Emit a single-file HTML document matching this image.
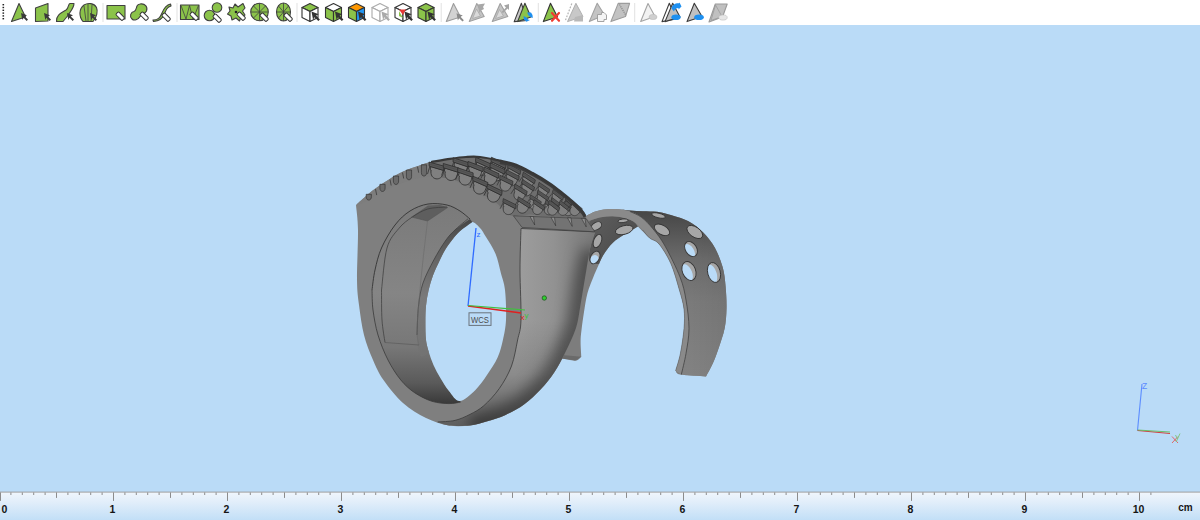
<!DOCTYPE html>
<html><head><meta charset="utf-8"><style>
html,body{margin:0;padding:0;width:1200px;height:520px;overflow:hidden;background:#badbf7;}
svg{display:block;font-family:"Liberation Sans",sans-serif;}
</style></head><body>
<svg width="1200" height="520" viewBox="0 0 1200 520">
<rect x="0" y="0" width="1200" height="520" fill="#badbf7"/>
<rect x="0" y="0" width="1200" height="25" fill="#ffffff"/>
<rect x="2.5" y="4.0" width="1.6" height="1.4" fill="#222"/>
<rect x="2.5" y="6.8" width="1.6" height="1.4" fill="#222"/>
<rect x="2.5" y="9.6" width="1.6" height="1.4" fill="#222"/>
<rect x="2.5" y="12.4" width="1.6" height="1.4" fill="#222"/>
<rect x="2.5" y="15.2" width="1.6" height="1.4" fill="#222"/>
<rect x="2.5" y="18.0" width="1.6" height="1.4" fill="#222"/>
<path d="M19,3.5 L25.5,17 L11.5,21.5Z" fill="#8bc34a" stroke="#404040" stroke-width="1.1" stroke-linejoin="round"/><path d="M21,13 l6.0,2.2 l-2.2,1.2 l3.2,3.2 l-1.3,1.3 l-3.2,-3.2 l-1.2,2.2Z" fill="#3a3a3a"/>
<path d="M35.5,8 L48,3.5 L48,21 L35.5,21.5Z" fill="#8bc34a" stroke="#404040" stroke-width="1.1" stroke-linejoin="round"/><path d="M44,13 l6.0,2.2 l-2.2,1.2 l3.2,3.2 l-1.3,1.3 l-3.2,-3.2 l-1.2,2.2Z" fill="#3a3a3a"/>
<path d="M56.5,21.5 C56,15 61,13 66,10 C69,8 68,4 70,3.5 L74,3.5 C74,8 70,12 67.5,16 L63,21.5Z" fill="#8bc34a" stroke="#404040" stroke-width="1.1" stroke-linejoin="round"/><path d="M67,13 l6.0,2.2 l-2.2,1.2 l3.2,3.2 l-1.3,1.3 l-3.2,-3.2 l-1.2,2.2Z" fill="#3a3a3a"/>
<path d="M83,21.5 C79,17 78.5,9 84,5 C88,2.5 94,3 96.5,7.5 C98,11 97,17 93,21.5Z" fill="#8bc34a" stroke="#404040" stroke-width="1.1" stroke-linejoin="round"/><path d="M84,6 L86,21 M88,4 L88,21 M92,5 L91,21" stroke="#404040" stroke-width="0.8"/><path d="M90,13 l6.0,2.2 l-2.2,1.2 l3.2,3.2 l-1.3,1.3 l-3.2,-3.2 l-1.2,2.2Z" fill="#3a3a3a"/>
<rect x="102.5" y="3" width="1" height="19" fill="#e2e2e2"/>
<rect x="176.5" y="3" width="1" height="19" fill="#e2e2e2"/>
<rect x="296.5" y="3" width="1" height="19" fill="#e2e2e2"/>
<rect x="440.7" y="3" width="1" height="19" fill="#e2e2e2"/>
<rect x="537.8" y="3" width="1" height="19" fill="#e2e2e2"/>
<rect x="634.2" y="3" width="1" height="19" fill="#e2e2e2"/>
<rect x="107" y="5.5" width="18" height="13.5" fill="#8bc34a" stroke="#404040" stroke-width="1.1" stroke-linejoin="round"/><g transform="translate(117,13) rotate(45)"><rect x="0" y="-2" width="9.0" height="4" rx="1.2" fill="#fff" stroke="#333" stroke-width="1"/></g>
<path d="M140,4 C145,3 148,7 146.5,11 C145,14 142,14 140,16.5 C138,20 134,21 132,19 C129,16 131,12 134,11.5 C136,11 136,9 137,6 C137.5,5 138.5,4.2 140,4Z" fill="#8bc34a" stroke="#404040" stroke-width="1.1" stroke-linejoin="round"/><g transform="translate(141,13) rotate(45)"><rect x="0" y="-2" width="9.0" height="4" rx="1.2" fill="#fff" stroke="#333" stroke-width="1"/></g>
<path d="M153,20 C158,20 160,18 162,13 C164,8 166,5 170.5,4 L171,6 C167,7 166,10 164.5,14 C162.5,19 159,21 153.5,21.5Z" fill="#8bc34a" stroke="#404040" stroke-width="1.1" stroke-linejoin="round"/><g transform="translate(163,14) rotate(45)"><rect x="0" y="-2" width="9.0" height="4" rx="1.2" fill="#fff" stroke="#333" stroke-width="1"/></g>
<rect x="180.5" y="5" width="18.5" height="14.5" fill="#8bc34a" stroke="#404040" stroke-width="1.1" stroke-linejoin="round"/><path d="M181,5.5 L186,19 L189.5,5.5 L193,19 L198.5,5.5" stroke="#404040" stroke-width="0.8" fill="none"/><g transform="translate(191,13) rotate(45)"><rect x="0" y="-2" width="9.0" height="4" rx="1.2" fill="#fff" stroke="#333" stroke-width="1"/></g>
<circle cx="217" cy="7.5" r="4.8" fill="#8bc34a" stroke="#404040" stroke-width="1.1" stroke-linejoin="round"/><circle cx="209.5" cy="15.5" r="5.3" fill="#8bc34a" stroke="#404040" stroke-width="1.1" stroke-linejoin="round"/><g transform="translate(214,15) rotate(45)"><rect x="0" y="-2" width="9.0" height="4" rx="1.2" fill="#fff" stroke="#333" stroke-width="1"/></g>
<path d="M229,7 L233,8 L235,4 L238,7 L243,3.5 L245,8 L242.5,11 L245,15 L241,17 L239.5,21 L236,18 L232,20 L231,16 L227.5,14 L230,11Z" fill="#8bc34a" stroke="#404040" stroke-width="1.1" stroke-linejoin="round"/><circle cx="236" cy="12" r="1.3" fill="#222"/><g transform="translate(238,13) rotate(45)"><rect x="0" y="-2" width="9.0" height="4" rx="1.2" fill="#fff" stroke="#333" stroke-width="1"/></g>
<circle cx="259.5" cy="12" r="8.8" fill="#8bc34a" stroke="#404040" stroke-width="1.1" stroke-linejoin="round"/><path d="M259.5,3.5 V20.5 M251,12 H268 M253.5,6 L265.5,18 M265.5,6 L253.5,18" stroke="#404040" stroke-width="0.8"/><g transform="translate(261,14) rotate(45)"><rect x="0" y="-2" width="9.0" height="4" rx="1.2" fill="#fff" stroke="#333" stroke-width="1"/></g>
<ellipse cx="283.5" cy="12" rx="7" ry="9" fill="#8bc34a" stroke="#404040" stroke-width="1.1" stroke-linejoin="round"/><path d="M283.5,3 V21 M276.5,12 H290.5 M278.5,6 L288.5,18 M288.5,6 L278.5,18" stroke="#404040" stroke-width="0.8"/><g transform="translate(285,14) rotate(45)"><rect x="0" y="-2" width="9.0" height="4" rx="1.2" fill="#fff" stroke="#333" stroke-width="1"/></g>
<path d="M302,7.5 L310,3.5 L318,7.5 L310,11.5Z" fill="#8bc34a" stroke="#333" stroke-width="1.1" stroke-linejoin="round"/><path d="M302,7.5 L310,11.5 L310,21.5 L302,17.5Z" fill="#fff" stroke="#333" stroke-width="1.1" stroke-linejoin="round"/><path d="M310,11.5 L318,7.5 L318,17.5 L310,21.5Z" fill="#fff" stroke="#333" stroke-width="1.1" stroke-linejoin="round"/><path d="M311.5,11.5 l7.199999999999999,2.64 l-2.64,1.44 l3.84,3.84 l-1.56,1.56 l-3.84,-3.84 l-1.44,2.64Z" fill="#333"/>
<path d="M325.5,7.5 L333.5,3.5 L341.5,7.5 L333.5,11.5Z" fill="#fff" stroke="#333" stroke-width="1.1" stroke-linejoin="round"/><path d="M325.5,7.5 L333.5,11.5 L333.5,21.5 L325.5,17.5Z" fill="#8bc34a" stroke="#333" stroke-width="1.1" stroke-linejoin="round"/><path d="M333.5,11.5 L341.5,7.5 L341.5,17.5 L333.5,21.5Z" fill="#8bc34a" stroke="#333" stroke-width="1.1" stroke-linejoin="round"/><path d="M335.0,11.5 l7.199999999999999,2.64 l-2.64,1.44 l3.84,3.84 l-1.56,1.56 l-3.84,-3.84 l-1.44,2.64Z" fill="#333"/>
<path d="M348.5,7.5 L356.5,3.5 L364.5,7.5 L356.5,11.5Z" fill="#ff9800" stroke="#333" stroke-width="1.1" stroke-linejoin="round"/><path d="M348.5,7.5 L356.5,11.5 L356.5,21.5 L348.5,17.5Z" fill="#8bc34a" stroke="#333" stroke-width="1.1" stroke-linejoin="round"/><path d="M356.5,11.5 L364.5,7.5 L364.5,17.5 L356.5,21.5Z" fill="#2196f3" stroke="#333" stroke-width="1.1" stroke-linejoin="round"/><path d="M358.0,11.5 l7.199999999999999,2.64 l-2.64,1.44 l3.84,3.84 l-1.56,1.56 l-3.84,-3.84 l-1.44,2.64Z" fill="#333"/>
<path d="M372,7.5 L380,3.5 L388,7.5 L380,11.5Z" fill="#fff" stroke="#aaa" stroke-width="1.1" stroke-linejoin="round"/><path d="M372,7.5 L380,11.5 L380,21.5 L372,17.5Z" fill="#fff" stroke="#aaa" stroke-width="1.1" stroke-linejoin="round"/><path d="M380,11.5 L388,7.5 L388,17.5 L380,21.5Z" fill="#fff" stroke="#aaa" stroke-width="1.1" stroke-linejoin="round"/><path d="M381.5,11.5 l7.199999999999999,2.64 l-2.64,1.44 l3.84,3.84 l-1.56,1.56 l-3.84,-3.84 l-1.44,2.64Z" fill="#aaa"/>
<path d="M395,7.5 L403,3.5 L411,7.5 L403,11.5Z" fill="#fff" stroke="#333" stroke-width="1.1" stroke-linejoin="round"/><path d="M395,7.5 L403,11.5 L403,21.5 L395,17.5Z" fill="#fff" stroke="#333" stroke-width="1.1" stroke-linejoin="round"/><path d="M403,11.5 L411,7.5 L411,17.5 L403,21.5Z" fill="#fff" stroke="#333" stroke-width="1.1" stroke-linejoin="round"/><path d="M399,9.5 L406,9.5 L403,15Z" fill="#e53935"/><path d="M399,11 L399,16 L403,18Z" fill="#8bc34a"/><path d="M404.5,11.5 l7.199999999999999,2.64 l-2.64,1.44 l3.84,3.84 l-1.56,1.56 l-3.84,-3.84 l-1.44,2.64Z" fill="#333"/>
<path d="M418,7.5 L426,3.5 L434,7.5 L426,11.5Z" fill="#8bc34a" stroke="#333" stroke-width="1.1" stroke-linejoin="round"/><path d="M418,7.5 L426,11.5 L426,21.5 L418,17.5Z" fill="#8bc34a" stroke="#333" stroke-width="1.1" stroke-linejoin="round"/><path d="M426,11.5 L434,7.5 L434,17.5 L426,21.5Z" fill="#8bc34a" stroke="#333" stroke-width="1.1" stroke-linejoin="round"/><path d="M427.5,11.5 l7.199999999999999,2.64 l-2.64,1.44 l3.84,3.84 l-1.56,1.56 l-3.84,-3.84 l-1.44,2.64Z" fill="#333"/>
<path d="M453.5,3.5 L460.5,17 L446.3,21.5Z" fill="#d2d2d2" stroke="#9c9c9c" stroke-width="1.1" stroke-linejoin="round"/><path d="M456.5,13.2 l6.300000000000001,2.3100000000000005 l-2.3100000000000005,1.26 l3.3600000000000003,3.3600000000000003 l-1.3650000000000002,1.3650000000000002 l-3.3600000000000003,-3.3600000000000003 l-1.26,2.3100000000000005Z" fill="#8a8a8a"/>
<path d="M476.8,3.5 L484.2,16.5 L469.3,21.5Z" fill="#c4c4c4" stroke="#a0a0a0" stroke-width="1.1" stroke-linejoin="round"/><path d="M476.5,9 L480.5,16 L472.5,18.5Z" fill="#dadada" stroke="#a8a8a8" stroke-width="0.8"/><path d="M477.5,4.5 L485,3.5 L483,7 L484,9 L481,10.5 L479.5,13Z" fill="#a8a8a8"/>
<path d="M500.2,3.5 L507.8,16.5 L492.3,21.5Z" fill="#c4c4c4" stroke="#a0a0a0" stroke-width="1.1" stroke-linejoin="round"/><path d="M499.5,9.5 L503.5,16 L495.5,18.5Z" fill="#dadada" stroke="#a8a8a8" stroke-width="0.8"/><path d="M501.5,12 L506,7.5 L504,5.5 L509,4 L509,10 L507.5,8.5 L503,13Z" fill="#a4a4a4"/>
<path d="M521.4,3.3 L527,20.5 L514.2,21.6Z" fill="#c8c8c8" stroke="#3c3c3c" stroke-width="1.1" stroke-linejoin="round"/><path d="M524.9,3.3 L531,17 L517.6,21.6Z" fill="#8bc34a" stroke="#3c3c3c" stroke-width="1.1" stroke-linejoin="round"/><path d="M527,12.5 L531,12.5 L532.5,15 L532.8,18 L530.5,17 L528.5,15.5Z M523.5,16 L526.5,17.5 L528,19.5 L530,20 L526.5,21.8 L524,19.5Z" fill="#1e90f0"/>
<path d="M550.5,3.3 L557.5,17 L543.3,21.6Z" fill="#8bc34a" stroke="#333" stroke-width="1.1" stroke-linejoin="round"/><path d="M552,13 L559,20.8 M559,13 L552,20.8" stroke="#f03c30" stroke-width="2.2" stroke-linecap="round"/>
<path d="M575.9,3.3 L583,16.5 L567.5,21.6Z" fill="#c8c8c8" stroke="#b0b0b0" stroke-width="1"/><path d="M571.8,3.5 L565,21.5" stroke="#b4b4b4" stroke-width="1.2" stroke-dasharray="1.8,1.4"/><path d="M575,17 L583,15 L583,21.5 L574,21.5Z" fill="#b8b8b8"/>
<path d="M597.2,3.3 L604.5,15 L589.3,21.6Z" fill="#c4c4c4" stroke="#a2a2a2" stroke-width="1.1" stroke-linejoin="round"/><path d="M597.5,14.5 L601.5,14.5 L601.5,12.5 L604,12.5 L606.5,15 L606.5,19.5 L604,19.5 L604,21.5 L597.5,21.5Z" fill="#f4f4f4" stroke="#9a9a9a" stroke-width="0.9"/>
<path d="M618.2,3.4 L629.6,3.4 L625.5,16.5 L610.9,21.6Z" fill="#c2c2c2" stroke="#9c9c9c" stroke-width="1.1" stroke-linejoin="round"/><path d="M619.5,4.5 L626,15.5" stroke="#8a8a8a" stroke-width="1.3" stroke-dasharray="1.2,0.9"/>
<path d="M648,3.5 L655,16.5 L640.7,21.5Z" fill="#f2f2f2" stroke="#a4a4a4" stroke-width="1.1" stroke-linejoin="round"/><ellipse cx="653" cy="17" rx="4" ry="2.6" fill="#cfcfcf" stroke="#bbb" stroke-width="0.6"/>
<path d="M669.3,3.3 L676,19 L662,21.6Z" fill="#fff" stroke="#3c3c3c" stroke-width="1.1" stroke-linejoin="round"/><path d="M672.7,3.3 L680,17 L665,21.6Z" fill="#c0c0c0" stroke="#3c3c3c" stroke-width="1.1" stroke-linejoin="round"/><ellipse cx="676" cy="17.3" rx="4.6" ry="2.8" fill="#1e90f0"/><path d="M671.5,8.5 C672,5 675,3 679,3.2 L679.5,2.5 L681.5,6.5 L678.5,9.5 L678.5,8 C676,8 674.5,9.5 674,11.5Z" fill="#1e90f0"/>
<path d="M694.3,3.3 L702,16.5 L687,21.6Z" fill="#c0c0c0" stroke="#3a3a3a" stroke-width="1.1" stroke-linejoin="round"/><ellipse cx="699" cy="17.2" rx="4.8" ry="2.8" fill="#1e90f0"/>
<path d="M715.3,4 L727.2,4 L722.5,17 L709,22Z" fill="#c0c0c0" stroke="#9a9a9a" stroke-width="1.1" stroke-linejoin="round"/><path d="M715.5,5 L711,20.5 L722,16.5Z" fill="none" stroke="#9a9a9a" stroke-width="0.8"/><ellipse cx="723" cy="17.5" rx="4.2" ry="2.6" fill="#e6e6e6" stroke="#bdbdbd" stroke-width="0.6"/>
<path d="M583.8,217.3 C585.7,216.3 591.4,212.8 595.3,211.5 C599.1,210.2 603.0,209.6 606.9,209.2 C610.8,208.8 614.5,209.0 618.4,209.2 C622.2,209.4 625.9,210.2 630.0,210.5 C634.1,210.8 638.5,211.0 643.0,211.2 C647.5,211.4 652.7,211.2 657.0,211.7 C661.3,212.2 663.6,212.8 668.8,214.4 C674.0,216.0 682.2,217.9 688.0,221.0 C693.8,224.1 699.0,228.2 703.5,232.7 C708.0,237.2 711.8,242.2 715.0,248.0 C718.2,253.8 720.9,260.9 722.7,267.3 C724.5,273.7 725.0,279.6 725.6,286.5 C726.2,293.4 726.7,302.0 726.5,309.0 C726.3,316.0 725.9,322.1 724.6,328.5 C723.3,334.9 720.7,341.9 718.8,347.7 C716.9,353.4 715.1,358.2 713.0,363.0 C710.9,367.8 707.2,374.2 706.0,376.5 C701.7,376.2 685.5,375.6 680.4,374.6 C675.3,373.7 676.4,371.4 675.6,370.8 C676.4,367.9 679.0,360.6 680.4,353.5 C681.8,346.4 683.4,335.9 684.0,328.5 C684.6,321.1 684.8,315.4 684.0,309.0 C683.2,302.6 681.6,297.6 679.4,290.0 C677.2,282.4 674.2,271.2 670.8,263.5 C667.4,255.8 662.5,248.2 659.0,244.0 C655.5,239.8 653.1,240.9 649.6,238.0 C646.1,235.1 639.9,228.5 638.0,226.6 C635.7,227.9 628.4,231.9 624.2,234.6 C620.0,237.3 616.0,239.8 612.6,243.0 C609.2,246.2 606.3,250.5 604.0,254.0 C601.7,257.5 600.8,260.0 599.0,264.0 C597.2,268.0 594.9,273.2 593.0,278.0 C591.1,282.8 589.0,287.3 587.5,293.0 C586.0,298.7 585.0,305.8 584.0,312.0 C583.0,318.2 582.1,325.0 581.5,330.0 C580.9,335.0 580.6,337.6 580.6,342.0 C580.6,346.4 581.2,354.2 581.3,356.7 C580.3,357.4 578.8,360.3 575.6,360.6 C572.4,360.9 564.3,358.9 562.0,358.6 C563.3,348.8 567.0,319.8 570.0,300.0 C573.0,280.2 577.7,253.8 580.0,240.0 C582.3,226.2 583.2,221.1 583.8,217.3Z" fill="#7d7d7d"/>
<path d="M562,355 L581.3,356.7 L575.6,360.6 L562,358.6Z" fill="#6a6a6a"/>
<defs><linearGradient id="bgi" gradientUnits="userSpaceOnUse" x1="590" y1="215" x2="630" y2="250"><stop offset="0" stop-color="#5e5e5e"/><stop offset="0.5" stop-color="#555"/><stop offset="1" stop-color="#4c4c4c"/></linearGradient></defs>
<path d="M589.5,220.8 C591.4,220.2 597.1,218.1 601.0,217.3 C604.9,216.5 608.7,216.1 612.6,216.2 C616.5,216.3 620.7,217.0 624.2,217.9 C627.7,218.8 631.1,220.0 633.4,221.4 C635.7,222.8 637.2,225.7 638.0,226.6 C635.7,227.9 628.4,231.9 624.2,234.6 C620.0,237.3 616.0,239.8 612.6,243.0 C609.2,246.2 606.3,250.5 604.0,254.0 C601.7,257.5 599.8,262.3 599.0,264.0 C597.5,263.7 591.8,265.2 590.0,262.0 C588.2,258.8 588.1,251.9 588.0,245.0 C587.9,238.1 589.2,224.8 589.5,220.8Z" fill="url(#bgi)"/>
<defs><linearGradient id="bgo" gradientUnits="userSpaceOnUse" x1="0" y1="211" x2="0" y2="376"><stop offset="0" stop-color="#464646"/><stop offset="0.12" stop-color="#555"/><stop offset="0.3" stop-color="#6c6c6c"/><stop offset="0.55" stop-color="#7a7a7a"/><stop offset="1" stop-color="#828282"/></linearGradient><linearGradient id="bgo2" gradientUnits="userSpaceOnUse" x1="690" y1="0" x2="727" y2="0"><stop offset="0" stop-color="#000" stop-opacity="0"/><stop offset="1" stop-color="#000" stop-opacity="0.05"/></linearGradient></defs>
<path d="M618.4,209.2 C620.3,209.4 625.9,210.2 630.0,210.5 C634.1,210.8 638.5,211.0 643.0,211.2 C647.5,211.4 652.7,211.2 657.0,211.7 C661.3,212.2 663.6,212.8 668.8,214.4 C674.0,216.0 682.2,217.9 688.0,221.0 C693.8,224.1 699.0,228.2 703.5,232.7 C708.0,237.2 711.8,242.2 715.0,248.0 C718.2,253.8 720.9,260.9 722.7,267.3 C724.5,273.7 725.0,279.6 725.6,286.5 C726.2,293.4 726.7,302.0 726.5,309.0 C726.3,316.0 725.9,322.1 724.6,328.5 C723.3,334.9 720.7,341.9 718.8,347.7 C716.9,353.4 715.1,358.2 713.0,363.0 C710.9,367.8 707.2,374.2 706.0,376.5 L681.3,374.6 C682.1,371.1 684.7,361.2 686.0,353.5 C687.3,345.8 689.0,337.4 689.0,328.5 C689.0,319.6 687.5,308.6 686.0,300.0 C684.5,291.4 683.5,286.0 680.0,277.0 C676.5,268.0 669.5,254.0 665.0,246.0 C660.5,238.0 656.9,233.7 653.0,228.9 C649.1,224.1 645.3,220.2 641.5,217.3 C637.7,214.4 633.9,212.8 630.0,211.5 C626.1,210.2 620.3,209.6 618.4,209.2Z" fill="url(#bgo)"/>
<path d="M618.4,209.2 C620.3,209.4 625.9,210.2 630.0,210.5 C634.1,210.8 638.5,211.0 643.0,211.2 C647.5,211.4 652.7,211.2 657.0,211.7 C661.3,212.2 663.6,212.8 668.8,214.4 C674.0,216.0 682.2,217.9 688.0,221.0 C693.8,224.1 699.0,228.2 703.5,232.7 C708.0,237.2 711.8,242.2 715.0,248.0 C718.2,253.8 720.9,260.9 722.7,267.3 C724.5,273.7 725.0,279.6 725.6,286.5 C726.2,293.4 726.7,302.0 726.5,309.0 C726.3,316.0 725.9,322.1 724.6,328.5 C723.3,334.9 720.7,341.9 718.8,347.7 C716.9,353.4 715.1,358.2 713.0,363.0 C710.9,367.8 707.2,374.2 706.0,376.5 L681.3,374.6 C682.1,371.1 684.7,361.2 686.0,353.5 C687.3,345.8 689.0,337.4 689.0,328.5 C689.0,319.6 687.5,308.6 686.0,300.0 C684.5,291.4 683.5,286.0 680.0,277.0 C676.5,268.0 669.5,254.0 665.0,246.0 C660.5,238.0 656.9,233.7 653.0,228.9 C649.1,224.1 645.3,220.2 641.5,217.3 C637.7,214.4 633.9,212.8 630.0,211.5 C626.1,210.2 620.3,209.6 618.4,209.2Z" fill="url(#bgo2)"/>
<path d="M583.8,217.3 C585.7,216.3 591.4,212.8 595.3,211.5 C599.1,210.2 603.0,209.6 606.9,209.2 C610.8,208.8 614.5,208.8 618.4,209.2 C622.2,209.6 626.1,210.2 630.0,211.5 C633.9,212.8 637.7,214.4 641.5,217.3 C645.3,220.2 649.1,224.1 653.0,228.9 C656.9,233.7 660.5,238.0 665.0,246.0 C669.5,254.0 676.5,268.0 680.0,277.0 C683.5,286.0 684.5,291.4 686.0,300.0 C687.5,308.6 689.0,319.6 689.0,328.5 C689.0,337.4 687.3,345.8 686.0,353.5 C684.7,361.2 682.1,371.1 681.3,374.6 L675.6,370.8 C676.4,367.9 679.0,360.6 680.4,353.5 C681.8,346.4 683.4,335.9 684.0,328.5 C684.6,321.1 684.8,315.4 684.0,309.0 C683.2,302.6 681.6,297.6 679.4,290.0 C677.2,282.4 674.2,271.2 670.8,263.5 C667.4,255.8 662.5,248.2 659.0,244.0 C655.5,239.8 652.3,240.3 649.6,238.0 C646.9,235.7 645.4,232.8 642.7,230.0 C640.0,227.2 636.5,223.4 633.4,221.4 C630.3,219.4 627.7,218.8 624.2,217.9 C620.7,217.0 616.5,216.3 612.6,216.2 C608.7,216.1 604.9,216.5 601.0,217.3 C597.1,218.1 591.4,220.2 589.5,220.8 L583.8,217.3Z" fill="#8a8a8a"/>
<path d="M630.0,211.5 C631.9,212.5 637.7,214.4 641.5,217.3 C645.3,220.2 649.1,224.1 653.0,228.9 C656.9,233.7 660.5,238.0 665.0,246.0 C669.5,254.0 676.5,268.0 680.0,277.0 C683.5,286.0 684.5,291.4 686.0,300.0 C687.5,308.6 689.0,319.6 689.0,328.5 C689.0,337.4 687.3,345.8 686.0,353.5 C684.7,361.2 682.1,371.1 681.3,374.6" stroke="#3a3a3a" stroke-width="0.7" fill="none"/>
<path d="M675.6,370.8 C676.4,367.9 679.0,360.6 680.4,353.5 C681.8,346.4 683.4,335.9 684.0,328.5 C684.6,321.1 684.8,315.4 684.0,309.0 C683.2,302.6 681.6,297.6 679.4,290.0 C677.2,282.4 674.2,271.2 670.8,263.5 C667.4,255.8 662.5,248.2 659.0,244.0 C655.5,239.8 652.3,240.3 649.6,238.0 C646.9,235.7 643.9,231.3 642.7,230.0" stroke="#555" stroke-width="0.5" fill="none"/>
<g transform="rotate(14 658.5 215.5)">
<clipPath id="hc0"><ellipse cx="658.5" cy="215.5" rx="7" ry="2.3"/></clipPath>
<ellipse cx="658.5" cy="215.5" rx="7" ry="2.3" fill="#a6a6a6"/>
<ellipse cx="658.5" cy="215.5" rx="7" ry="2.3" fill="none" stroke="#353535" stroke-width="0.9"/>
</g>
<g transform="rotate(30 662 229.8)">
<clipPath id="hc1"><ellipse cx="662" cy="229.8" rx="8.5" ry="4.6"/></clipPath>
<ellipse cx="662" cy="229.8" rx="8.5" ry="4.6" fill="#a6a6a6"/>
<ellipse cx="662" cy="229.8" rx="8.5" ry="4.6" fill="none" stroke="#353535" stroke-width="0.9"/>
</g>
<g transform="rotate(35 694.8 232)">
<clipPath id="hc2"><ellipse cx="694.8" cy="232" rx="9" ry="5"/></clipPath>
<ellipse cx="694.8" cy="232" rx="9" ry="5" fill="#a6a6a6"/>
<ellipse cx="694.8" cy="232" rx="9" ry="5" fill="none" stroke="#353535" stroke-width="0.9"/>
</g>
<g transform="rotate(58 691 249)">
<clipPath id="hc3"><ellipse cx="691" cy="249" rx="8.2" ry="5.6"/></clipPath>
<ellipse cx="691" cy="249" rx="8.2" ry="5.6" fill="#a6a6a6"/>
<ellipse cx="692.0" cy="251.4" rx="7.8" ry="4.5" fill="#badbf7" clip-path="url(#hc3)"/>
<ellipse cx="691" cy="249" rx="8.2" ry="5.6" fill="none" stroke="#353535" stroke-width="0.9"/>
</g>
<g transform="rotate(68 689 271)">
<clipPath id="hc4"><ellipse cx="689" cy="271" rx="9.8" ry="6.6"/></clipPath>
<ellipse cx="689" cy="271" rx="9.8" ry="6.6" fill="#a6a6a6"/>
<ellipse cx="690.2" cy="273.8" rx="9.3" ry="5.3" fill="#badbf7" clip-path="url(#hc4)"/>
<ellipse cx="689" cy="271" rx="9.8" ry="6.6" fill="none" stroke="#353535" stroke-width="0.9"/>
</g>
<g transform="rotate(75 714 272.5)">
<clipPath id="hc5"><ellipse cx="714" cy="272.5" rx="10.2" ry="6.3"/></clipPath>
<ellipse cx="714" cy="272.5" rx="10.2" ry="6.3" fill="#a6a6a6"/>
<ellipse cx="715.2" cy="275.1" rx="9.7" ry="5.0" fill="#badbf7" clip-path="url(#hc5)"/>
<ellipse cx="714" cy="272.5" rx="10.2" ry="6.3" fill="none" stroke="#353535" stroke-width="0.9"/>
</g>
<g transform="rotate(-5 623 220.8)">
<clipPath id="hc6"><ellipse cx="623" cy="220.8" rx="5" ry="1.8"/></clipPath>
<ellipse cx="623" cy="220.8" rx="5" ry="1.8" fill="#a6a6a6"/>
<ellipse cx="623" cy="220.8" rx="5" ry="1.8" fill="none" stroke="#353535" stroke-width="0.9"/>
</g>
<g transform="rotate(-15 624.2 230)">
<clipPath id="hc7"><ellipse cx="624.2" cy="230" rx="9" ry="4.3"/></clipPath>
<ellipse cx="624.2" cy="230" rx="9" ry="4.3" fill="#a6a6a6"/>
<ellipse cx="624.2" cy="230" rx="9" ry="4.3" fill="none" stroke="#353535" stroke-width="0.9"/>
</g>
<g transform="rotate(-30 596.5 226)">
<clipPath id="hc8"><ellipse cx="596.5" cy="226" rx="5.5" ry="3.6"/></clipPath>
<ellipse cx="596.5" cy="226" rx="5.5" ry="3.6" fill="#a6a6a6"/>
<ellipse cx="596.5" cy="226" rx="5.5" ry="3.6" fill="none" stroke="#353535" stroke-width="0.9"/>
</g>
<g transform="rotate(22 597.5 241)">
<clipPath id="hc9"><ellipse cx="597.5" cy="241" rx="3.8" ry="7"/></clipPath>
<ellipse cx="597.5" cy="241" rx="3.8" ry="7" fill="#a6a6a6"/>
<ellipse cx="597.5" cy="241" rx="3.8" ry="7" fill="none" stroke="#353535" stroke-width="0.9"/>
</g>
<g transform="rotate(28 595 257.5)">
<clipPath id="hc10"><ellipse cx="595" cy="257.5" rx="4.4" ry="6.8"/></clipPath>
<ellipse cx="595" cy="257.5" rx="4.4" ry="6.8" fill="#a6a6a6"/>
<ellipse cx="595.5" cy="260.4" rx="4.2" ry="5.4" fill="#badbf7" clip-path="url(#hc10)"/>
<ellipse cx="595" cy="257.5" rx="4.4" ry="6.8" fill="none" stroke="#353535" stroke-width="0.9"/>
</g>
<path d="M356.0,205.0 C357.5,203.7 362.3,199.3 365.0,197.0 C367.7,194.7 368.7,193.5 372.0,191.0 C375.3,188.5 380.3,185.0 385.0,182.0 C389.7,179.0 395.0,175.5 400.0,173.0 C405.0,170.5 409.8,168.8 415.0,167.0 C420.2,165.2 425.2,163.4 431.0,162.0 C436.8,160.6 444.2,159.6 450.0,158.8 C455.8,158.0 461.0,157.3 466.0,157.0 C471.0,156.7 474.3,156.4 480.0,157.0 C485.7,157.6 493.9,159.4 500.0,160.7 C506.1,162.0 510.8,162.8 516.3,164.8 C521.8,166.9 527.2,170.0 532.7,173.0 C538.2,176.0 544.1,179.5 549.0,182.8 C553.9,186.1 558.2,189.6 562.0,192.6 C565.8,195.6 568.6,197.8 571.9,200.8 C575.2,203.8 579.5,208.2 581.7,210.6 C583.9,213.0 582.8,211.8 585.0,215.5 C587.2,219.2 593.3,229.7 595.0,232.5 C594.2,235.2 591.7,241.4 590.0,249.0 C588.3,256.6 586.6,268.7 585.0,278.0 C583.4,287.3 582.0,296.7 580.5,305.0 C579.0,313.3 578.6,320.0 576.0,328.0 C573.4,336.0 568.6,345.7 565.0,353.0 C561.4,360.3 558.5,366.0 554.5,372.0 C550.5,378.0 546.1,383.6 541.0,389.0 C535.9,394.4 529.9,400.2 524.0,404.5 C518.1,408.8 511.6,412.2 505.5,415.0 C499.4,417.8 493.2,419.5 487.3,421.3 C481.4,423.1 476.4,424.9 470.0,425.6 C463.6,426.3 456.3,426.9 449.0,425.6 C441.7,424.3 433.7,421.8 426.0,418.0 C418.3,414.2 410.1,409.3 403.0,403.0 C395.9,396.7 388.5,387.2 383.5,380.0 C378.5,372.8 376.2,367.5 373.0,360.0 C369.8,352.5 366.3,344.2 364.0,335.0 C361.7,325.8 360.2,314.2 359.0,305.0 C357.8,295.8 357.2,292.5 357.0,280.0 C356.8,267.5 358.2,242.5 358.0,230.0 C357.8,217.5 356.3,209.2 356.0,205.0Z" fill="#7f7f7f"/>
<defs><linearGradient id="og" gradientUnits="userSpaceOnUse" x1="515" y1="0" x2="600" y2="0"><stop offset="0" stop-color="#9e9e9e"/><stop offset="0.45" stop-color="#929292"/><stop offset="1" stop-color="#747474"/></linearGradient><linearGradient id="og2" gradientUnits="userSpaceOnUse" x1="0" y1="320" x2="0" y2="428"><stop offset="0" stop-color="#000" stop-opacity="0"/><stop offset="0.5" stop-color="#000" stop-opacity="0.12"/><stop offset="1" stop-color="#000" stop-opacity="0.42"/></linearGradient></defs>
<path d="M521.0,228.5 L594.8,231.8 C594.0,234.7 591.6,241.3 590.0,249.0 C588.4,256.7 586.6,268.7 585.0,278.0 C583.4,287.3 582.0,296.7 580.5,305.0 C579.0,313.3 578.6,320.0 576.0,328.0 C573.4,336.0 568.6,345.7 565.0,353.0 C561.4,360.3 558.5,366.0 554.5,372.0 C550.5,378.0 546.1,383.6 541.0,389.0 C535.9,394.4 529.9,400.2 524.0,404.5 C518.1,408.8 511.6,412.2 505.5,415.0 C499.4,417.8 493.2,419.5 487.3,421.3 C481.4,423.1 476.4,424.9 470.0,425.6 C463.6,426.3 454.4,426.2 449.0,425.6 C443.6,425.0 439.6,422.6 437.7,422.0 C440.6,421.7 449.6,421.7 455.0,420.4 C460.4,419.1 465.2,416.8 470.0,414.4 C474.8,411.9 478.9,410.0 483.8,405.7 C488.7,401.4 494.8,395.0 499.4,388.4 C504.0,381.8 508.5,374.1 511.5,366.0 C514.5,357.9 516.0,347.7 517.6,340.0 C519.2,332.3 520.6,331.7 521.0,320.0 C521.4,308.3 520.0,285.2 520.0,270.0 C520.0,254.8 520.8,235.4 521.0,228.5Z" fill="url(#og)"/>
<path d="M521.0,228.5 L594.8,231.8 C594.0,234.7 591.6,241.3 590.0,249.0 C588.4,256.7 586.6,268.7 585.0,278.0 C583.4,287.3 582.0,296.7 580.5,305.0 C579.0,313.3 578.6,320.0 576.0,328.0 C573.4,336.0 568.6,345.7 565.0,353.0 C561.4,360.3 558.5,366.0 554.5,372.0 C550.5,378.0 546.1,383.6 541.0,389.0 C535.9,394.4 529.9,400.2 524.0,404.5 C518.1,408.8 511.6,412.2 505.5,415.0 C499.4,417.8 493.2,419.5 487.3,421.3 C481.4,423.1 476.4,424.9 470.0,425.6 C463.6,426.3 454.4,426.2 449.0,425.6 C443.6,425.0 439.6,422.6 437.7,422.0 C440.6,421.7 449.6,421.7 455.0,420.4 C460.4,419.1 465.2,416.8 470.0,414.4 C474.8,411.9 478.9,410.0 483.8,405.7 C488.7,401.4 494.8,395.0 499.4,388.4 C504.0,381.8 508.5,374.1 511.5,366.0 C514.5,357.9 516.0,347.7 517.6,340.0 C519.2,332.3 520.6,331.7 521.0,320.0 C521.4,308.3 520.0,285.2 520.0,270.0 C520.0,254.8 520.8,235.4 521.0,228.5Z" fill="url(#og2)"/>
<defs><clipPath id="ocl"><path d="M521.0,228.5 L594.8,231.8 C594.0,234.7 591.6,241.3 590.0,249.0 C588.4,256.7 586.6,268.7 585.0,278.0 C583.4,287.3 582.0,296.7 580.5,305.0 C579.0,313.3 578.6,320.0 576.0,328.0 C573.4,336.0 568.6,345.7 565.0,353.0 C561.4,360.3 558.5,366.0 554.5,372.0 C550.5,378.0 546.1,383.6 541.0,389.0 C535.9,394.4 529.9,400.2 524.0,404.5 C518.1,408.8 511.6,412.2 505.5,415.0 C499.4,417.8 493.2,419.5 487.3,421.3 C481.4,423.1 476.4,424.9 470.0,425.6 C463.6,426.3 454.4,426.2 449.0,425.6 C443.6,425.0 439.6,422.6 437.7,422.0 C440.6,421.7 449.6,421.7 455.0,420.4 C460.4,419.1 465.2,416.8 470.0,414.4 C474.8,411.9 478.9,410.0 483.8,405.7 C488.7,401.4 494.8,395.0 499.4,388.4 C504.0,381.8 508.5,374.1 511.5,366.0 C514.5,357.9 516.0,347.7 517.6,340.0 C519.2,332.3 520.6,331.7 521.0,320.0 C521.4,308.3 520.0,285.2 520.0,270.0 C520.0,254.8 520.8,235.4 521.0,228.5Z"/></clipPath><filter id="bl8" x="-50%" y="-50%" width="200%" height="200%"><feGaussianBlur stdDeviation="7"/></filter></defs>
<g clip-path="url(#ocl)"><path d="M592.0,250.0 C591.4,252.5 589.7,260.3 588.5,265.0 C587.3,269.7 586.3,271.3 585.0,278.0 C583.7,284.7 582.0,296.7 580.5,305.0 C579.0,313.3 578.6,320.0 576.0,328.0 C573.4,336.0 568.6,345.7 565.0,353.0 C561.4,360.3 558.5,366.0 554.5,372.0 C550.5,378.0 546.1,383.6 541.0,389.0 C535.9,394.4 529.9,400.2 524.0,404.5 C518.1,408.8 511.6,412.2 505.5,415.0 C499.4,417.8 493.2,419.5 487.3,421.3 C481.4,423.1 472.9,424.9 470.0,425.6" stroke="#000" stroke-opacity="0.38" stroke-width="22" fill="none" filter="url(#bl8)"/></g>
<defs><linearGradient id="ig" gradientUnits="userSpaceOnUse" x1="0" y1="204" x2="0" y2="403"><stop offset="0" stop-color="#7a7a7a"/><stop offset="0.45" stop-color="#858585"/><stop offset="0.72" stop-color="#777777"/><stop offset="0.9" stop-color="#5a5a5a"/><stop offset="1" stop-color="#3a3a3a"/></linearGradient></defs>
<path d="M470.0,219.0 C468.3,217.7 463.8,213.3 460.0,211.0 C456.2,208.7 452.3,206.2 447.0,205.0 C441.7,203.8 434.2,203.0 428.0,204.0 C421.8,205.0 415.5,207.5 410.0,211.0 C404.5,214.5 399.8,218.8 395.0,225.0 C390.2,231.2 384.8,240.5 381.5,248.0 C378.2,255.5 376.6,263.0 375.0,270.0 C373.4,277.0 372.3,283.3 372.0,290.0 C371.7,296.7 372.0,302.5 373.0,310.0 C374.0,317.5 375.5,326.7 378.0,335.0 C380.5,343.3 384.2,352.5 388.0,360.0 C391.8,367.5 396.4,374.6 400.8,380.0 C405.2,385.4 409.4,389.1 414.6,392.7 C419.8,396.2 426.3,399.5 432.0,401.3 C437.7,403.1 444.2,403.5 449.0,403.6 C453.8,403.7 458.8,402.3 460.7,402.0 C458.8,400.2 452.4,395.0 449.0,391.0 C445.6,387.0 443.0,382.3 440.4,378.0 C437.8,373.7 435.4,369.3 433.5,365.0 C431.6,360.7 430.1,356.2 428.8,352.0 C427.6,347.8 426.6,345.1 426.0,340.0 C425.4,334.9 425.4,327.2 425.4,321.5 C425.4,315.8 425.5,311.1 426.0,306.0 C426.5,300.9 427.3,295.9 428.5,290.8 C429.7,285.7 431.2,280.2 433.0,275.4 C434.8,270.6 436.9,266.4 439.0,262.0 C441.1,257.6 442.8,253.5 445.8,248.8 C448.9,244.1 453.3,238.8 457.3,233.8 C461.3,228.8 467.9,221.5 470.0,219.0Z" fill="url(#ig)"/>
<path d="M472.3,222.0 C474.8,222.2 477.7,225.5 480.0,228.0 C482.3,230.5 483.4,232.8 486.0,237.0 C488.6,241.2 492.9,247.5 495.4,253.4 C497.9,259.4 499.2,266.6 500.8,272.7 C502.4,278.8 504.1,282.1 505.0,290.0 C505.9,297.9 506.4,311.7 506.0,320.0 C505.6,328.3 504.3,333.8 502.9,340.0 C501.5,346.2 500.3,351.5 497.7,357.3 C495.1,363.1 491.1,369.1 487.3,374.6 C483.6,380.1 479.8,385.8 475.2,390.2 C470.6,394.6 464.0,400.9 459.6,401.0 C455.2,401.1 452.2,394.8 449.0,391.0 C445.8,387.2 443.0,382.3 440.4,378.0 C437.8,373.7 435.4,369.3 433.5,365.0 C431.6,360.7 430.1,356.2 428.8,352.0 C427.6,347.8 426.6,345.1 426.0,340.0 C425.4,334.9 425.4,327.2 425.4,321.5 C425.4,315.8 425.5,311.1 426.0,306.0 C426.5,300.9 427.3,295.9 428.5,290.8 C429.7,285.7 431.2,280.2 433.0,275.4 C434.8,270.6 436.9,266.4 439.0,262.0 C441.1,257.6 442.8,253.5 445.8,248.8 C448.9,244.1 454.1,237.5 457.3,233.8 C460.5,230.1 462.5,228.5 465.0,226.5 C467.5,224.5 469.8,221.8 472.3,222.0Z" fill="#badbf7"/>
<defs><linearGradient id="stg" gradientUnits="userSpaceOnUse" x1="0" y1="219" x2="0" y2="360"><stop offset="0" stop-color="#464646"/><stop offset="0.22" stop-color="#606060"/><stop offset="0.55" stop-color="#7a7a7a"/><stop offset="1" stop-color="#727272"/></linearGradient></defs>
<path d="M470.0,219.0 C467.7,220.7 460.0,225.5 456.0,229.0 C452.0,232.5 449.7,234.8 446.0,240.0 C442.3,245.2 437.6,252.8 433.8,260.0 C430.0,267.2 425.6,275.3 423.0,283.0 C420.4,290.7 419.5,296.5 418.5,306.0 C417.5,315.5 416.6,331.7 417.0,340.0 C417.4,348.3 419.0,354.0 421.0,356.0 C423.0,358.0 427.5,352.7 428.8,352.0 C428.3,350.0 426.6,345.1 426.0,340.0 C425.4,334.9 425.4,327.2 425.4,321.5 C425.4,315.8 425.5,311.1 426.0,306.0 C426.5,300.9 427.3,295.9 428.5,290.8 C429.7,285.7 431.2,280.2 433.0,275.4 C434.8,270.6 436.9,266.4 439.0,262.0 C441.1,257.6 442.8,253.5 445.8,248.8 C448.9,244.1 452.9,238.3 457.3,233.8 C461.7,229.3 469.8,224.0 472.3,222.0Z" fill="url(#stg)"/>
<path d="M411.3,217 L427.5,221 L448,207.3 L440,205 L428,205.5 Z" fill="#5e5e5e"/>
<path d="M381.5,290.0 C382.4,283.0 384.1,258.2 387.0,248.0 C389.9,237.8 394.6,233.7 398.8,228.5 C403.0,223.3 407.5,220.2 412.3,217.0 C417.1,213.8 421.9,210.7 427.7,209.0 C433.5,207.3 443.8,207.3 447.0,207.0" stroke="#3a3a3a" stroke-width="0.7" fill="none"/>
<path d="M411.3,217 L427.5,221 L448,207.3" stroke="#555" stroke-width="0.6" fill="none"/>
<path d="M468.0,218.8 C466.0,220.5 459.7,225.5 456.0,229.0 C452.3,232.5 449.7,234.8 446.0,240.0 C442.3,245.2 437.6,252.8 433.8,260.0 C430.0,267.2 425.6,275.3 423.0,283.0 C420.4,290.7 419.5,297.3 418.5,306.0 C417.5,314.7 417.2,330.2 417.0,335.0" stroke="#3a3a3a" stroke-width="0.7" fill="none"/>
<path d="M427.5,221.0 C426.8,227.5 424.2,248.5 423.0,260.0 C421.8,271.5 421.0,278.3 420.0,290.0 C419.0,301.7 417.2,320.8 417.0,330.0 C416.8,339.2 418.7,342.5 419.0,345.0" stroke="#6a6a6a" stroke-width="0.6" fill="none"/>
<path d="M381.5,290.0 C381.6,295.0 381.4,311.2 382.0,320.0 C382.6,328.8 384.5,338.8 385.0,342.5" stroke="#3a3a3a" stroke-width="0.7" fill="none"/>
<path d="M385,342.5 L419,345" stroke="#555" stroke-width="0.6" fill="none"/>
<path d="M372.0,290.0 C372.2,293.3 372.0,302.5 373.0,310.0 C374.0,317.5 375.5,326.7 378.0,335.0 C380.5,343.3 384.2,352.5 388.0,360.0 C391.8,367.5 396.4,374.6 400.8,380.0 C405.2,385.4 409.4,389.1 414.6,392.7 C419.8,396.2 426.3,399.5 432.0,401.3 C437.7,403.1 444.2,403.5 449.0,403.6 C453.8,403.7 458.8,402.3 460.7,402.0" stroke="#3a3a3a" stroke-width="0.8" fill="none"/>
<path d="M372.0,290.0 C372.5,286.7 373.4,277.0 375.0,270.0 C376.6,263.0 378.2,255.5 381.5,248.0 C384.8,240.5 390.2,231.2 395.0,225.0 C399.8,218.8 404.5,214.5 410.0,211.0 C415.5,207.5 421.8,205.0 428.0,204.0 C434.2,203.0 441.7,203.8 447.0,205.0 C452.3,206.2 456.2,208.7 460.0,211.0 C463.8,213.3 468.3,217.7 470.0,219.0" stroke="#333" stroke-width="0.9" fill="none"/>
<path d="M521.0,228.5 C520.8,235.4 520.0,254.8 520.0,270.0 C520.0,285.2 521.4,308.3 521.0,320.0 C520.6,331.7 519.2,332.3 517.6,340.0 C516.0,347.7 514.5,357.9 511.5,366.0 C508.5,374.1 504.0,381.8 499.4,388.4 C494.8,395.0 488.7,401.4 483.8,405.7 C478.9,410.0 474.8,411.9 470.0,414.4 C465.2,416.8 460.4,419.1 455.0,420.4 C449.6,421.7 440.6,421.7 437.7,422.0" stroke="#383838" stroke-width="0.8" fill="none"/>
<path d="M521,228.5 L594.8,231.8" stroke="#3a3a3a" stroke-width="0.8"/>
<path d="M356.0,205.0 C357.5,203.7 362.3,199.3 365.0,197.0 C367.7,194.7 368.7,193.5 372.0,191.0 C375.3,188.5 380.3,185.0 385.0,182.0 C389.7,179.0 395.0,175.5 400.0,173.0 C405.0,170.5 409.8,168.8 415.0,167.0 C420.2,165.2 425.2,163.4 431.0,162.0 C436.8,160.6 444.2,159.6 450.0,158.8 C455.8,158.0 461.0,157.3 466.0,157.0 C471.0,156.7 474.3,156.4 480.0,157.0 C485.7,157.6 493.9,159.4 500.0,160.7 C506.1,162.0 510.8,162.8 516.3,164.8 C521.8,166.9 527.2,170.0 532.7,173.0 C538.2,176.0 544.1,179.5 549.0,182.8 C553.9,186.1 558.2,189.6 562.0,192.6 C565.8,195.6 568.6,197.8 571.9,200.8 C575.2,203.8 579.5,208.2 581.7,210.6 C583.9,213.0 584.5,214.7 585.0,215.5 C583.3,215.8 579.2,217.1 575.0,217.5 C570.8,217.9 565.0,217.8 560.0,218.0 C555.0,218.2 550.0,218.7 545.0,218.5 C540.0,218.3 535.0,217.5 530.0,217.0 C525.0,216.5 518.9,216.5 514.7,215.5 C510.5,214.5 509.1,213.4 505.0,211.0 C500.9,208.6 494.5,203.8 490.0,201.0 C485.5,198.2 482.2,196.5 478.0,194.0 C473.8,191.5 469.7,188.5 465.0,186.0 C460.3,183.5 454.2,180.7 450.0,179.0 C445.8,177.3 445.0,176.2 440.0,176.0 C435.0,175.8 425.8,177.0 420.0,178.0 C414.2,179.0 410.0,180.3 405.0,182.0 C400.0,183.7 395.0,185.7 390.0,188.0 C385.0,190.3 379.2,193.7 375.0,196.0 C370.8,198.3 368.2,200.5 365.0,202.0 C361.8,203.5 357.5,204.5 356.0,205.0Z" fill="#7d7d7d"/>
<path d="M366.2,194.3 L366.2,196.7 C366.2,201.2 371.4,201.2 371.4,196.7 L371.4,194.3Z" fill="#6a6a6a" stroke="#303030" stroke-width="0.65"/>
<path d="M379.9,184.3 L379.9,188.1 C379.9,192.6 385.1,192.6 385.1,188.1 L385.1,184.3Z" fill="#6a6a6a" stroke="#303030" stroke-width="0.65"/>
<path d="M393.4,176.0 L393.4,181.1 C393.4,185.6 398.6,185.6 398.6,181.1 L398.6,176.0Z" fill="#6a6a6a" stroke="#303030" stroke-width="0.65"/>
<path d="M406.4,170.0 L406.4,176.4 C406.4,180.9 411.6,180.9 411.6,176.4 L411.6,170.0Z" fill="#6a6a6a" stroke="#303030" stroke-width="0.65"/>
<path d="M421.4,164.8 L421.4,172.7 C421.4,177.2 426.6,177.2 426.6,172.7 L426.6,164.8Z" fill="#6a6a6a" stroke="#303030" stroke-width="0.65"/>
<path d="M434.9,161.5 L434.9,170.8 C434.9,175.3 440.1,175.3 440.1,170.8 L440.1,161.5Z" fill="#6a6a6a" stroke="#303030" stroke-width="0.65"/>
<path d="M375.5,189.1 L376.7,195.1" stroke="#383838" stroke-width="0.8"/>
<path d="M390.0,179.5 L391.2,185.5" stroke="#383838" stroke-width="0.8"/>
<path d="M402.5,172.5 L403.7,178.5" stroke="#383838" stroke-width="0.8"/>
<path d="M417.5,166.7 L418.7,172.7" stroke="#383838" stroke-width="0.8"/>
<path d="M431.5,162.4 L432.7,168.4" stroke="#383838" stroke-width="0.8"/>
<path d="M430.0,162.3 L434.0,161.5 L438.0,160.8 L442.0,160.1 L446.0,159.5 L450.0,158.8 L454.0,158.4 L458.0,157.9 L462.0,157.4 L466.0,157.0 L470.0,157.0 L474.0,157.0 L478.0,157.0 L482.0,157.4 L486.0,158.1 L490.0,158.8 L494.0,159.6 L498.0,160.3 L502.0,161.2 L506.0,162.2 L510.0,163.2 L514.0,164.2 L518.0,165.7 L522.0,167.7 L526.0,169.7 L530.0,171.6 L534.0,173.8 L538.0,176.2 L542.0,178.6 L546.0,181.0 L550.0,183.6 L554.0,186.6 L558.0,189.6 L562.0,192.6 L566.0,195.9 L570.0,199.2 L574.0,202.9 L578.0,206.9 L582.0,211.0 L586.0,215.5 L586.0,218.5 L582.0,218.0 L578.0,217.9 L574.0,217.7 L570.0,217.2 L566.0,217.1 L562.0,217.0 L558.0,216.9 L554.0,216.6 L550.0,216.2 L546.0,216.3 L542.0,216.0 L538.0,215.5 L534.0,214.9 L530.0,214.6 L526.0,214.9 L522.0,215.2 L518.0,215.4 L514.0,216.2 L510.0,215.2 L506.0,211.5 L502.0,207.9 L498.0,204.3 L494.0,201.2 L490.0,198.7 L486.0,196.3 L482.0,193.8 L478.0,191.2 L474.0,188.8 L470.0,186.4 L466.0,184.0 L462.0,182.6 L458.0,181.2 L454.0,179.8 L450.0,178.5 L446.0,178.1 L442.0,177.7 L438.0,177.4 L434.0,175.5 L430.0,172.3Z" fill="#6e6e6e"/>
<g transform="translate(499.1,162.8) rotate(21.4) scale(1.08)"><path d="M-6,1.5 L6.5,2.7 L6.5,5 C6.5,14 -5,14 -5,4.8 L-6,4.5Z" fill="#808080" stroke="#2e2e2e" stroke-width="0.7"/><path d="M-7,1.8 L-7.6,9" stroke="#333" stroke-width="0.7"/><path d="M-8.5,-2.2 L6.5,-1.2 L7.5,2.8 L-7.5,1.6Z" fill="#585858" stroke="#2a2a2a" stroke-width="0.65"/><path d="M-7.5,-0.4 L7.5,0.8" stroke="#484848" stroke-width="0.5"/></g>
<g transform="translate(514.7,169.1) rotate(24.2) scale(0.95)"><path d="M-6,1.5 L6.5,2.7 L6.5,5 C6.5,14 -5,14 -5,4.8 L-6,4.5Z" fill="#808080" stroke="#2e2e2e" stroke-width="0.7"/><path d="M-7,1.8 L-7.6,9" stroke="#333" stroke-width="0.7"/><path d="M-8.5,-2.2 L6.5,-1.2 L7.5,2.8 L-7.5,1.6Z" fill="#585858" stroke="#2a2a2a" stroke-width="0.65"/><path d="M-7.5,-0.4 L7.5,0.8" stroke="#484848" stroke-width="0.5"/></g>
<g transform="translate(529.4,177.9) rotate(29.0) scale(0.95)"><path d="M-6,1.5 L6.5,2.7 L6.5,5 C6.5,14 -5,14 -5,4.8 L-6,4.5Z" fill="#808080" stroke="#2e2e2e" stroke-width="0.7"/><path d="M-7,1.8 L-7.6,9" stroke="#333" stroke-width="0.7"/><path d="M-8.5,-2.2 L6.5,-1.2 L7.5,2.8 L-7.5,1.6Z" fill="#585858" stroke="#2a2a2a" stroke-width="0.65"/><path d="M-7.5,-0.4 L7.5,0.8" stroke="#484848" stroke-width="0.5"/></g>
<g transform="translate(544.4,187.6) rotate(30.3) scale(0.85)"><path d="M-6,1.5 L6.5,2.7 L6.5,5 C6.5,14 -5,14 -5,4.8 L-6,4.5Z" fill="#808080" stroke="#2e2e2e" stroke-width="0.7"/><path d="M-7,1.8 L-7.6,9" stroke="#333" stroke-width="0.7"/><path d="M-8.5,-2.2 L6.5,-1.2 L7.5,2.8 L-7.5,1.6Z" fill="#585858" stroke="#2a2a2a" stroke-width="0.65"/><path d="M-7.5,-0.4 L7.5,0.8" stroke="#484848" stroke-width="0.5"/></g>
<g transform="translate(558.4,194.8) rotate(33.2) scale(0.85)"><path d="M-6,1.5 L6.5,2.7 L6.5,5 C6.5,14 -5,14 -5,4.8 L-6,4.5Z" fill="#808080" stroke="#2e2e2e" stroke-width="0.7"/><path d="M-7,1.8 L-7.6,9" stroke="#333" stroke-width="0.7"/><path d="M-8.5,-2.2 L6.5,-1.2 L7.5,2.8 L-7.5,1.6Z" fill="#585858" stroke="#2a2a2a" stroke-width="0.65"/><path d="M-7.5,-0.4 L7.5,0.8" stroke="#484848" stroke-width="0.5"/></g>
<g transform="translate(571.4,202.4) rotate(34.9) scale(0.85)"><path d="M-6,1.5 L6.5,2.7 L6.5,5 C6.5,14 -5,14 -5,4.8 L-6,4.5Z" fill="#808080" stroke="#2e2e2e" stroke-width="0.7"/><path d="M-7,1.8 L-7.6,9" stroke="#333" stroke-width="0.7"/><path d="M-8.5,-2.2 L6.5,-1.2 L7.5,2.8 L-7.5,1.6Z" fill="#585858" stroke="#2a2a2a" stroke-width="0.65"/><path d="M-7.5,-0.4 L7.5,0.8" stroke="#484848" stroke-width="0.5"/></g>
<g transform="translate(483.7,162.7) rotate(19.9) scale(1.08)"><path d="M-6,1.5 L6.5,2.7 L6.5,5 C6.5,14 -5,14 -5,4.8 L-6,4.5Z" fill="#808080" stroke="#2e2e2e" stroke-width="0.7"/><path d="M-7,1.8 L-7.6,9" stroke="#333" stroke-width="0.7"/><path d="M-8.5,-2.2 L6.5,-1.2 L7.5,2.8 L-7.5,1.6Z" fill="#585858" stroke="#2a2a2a" stroke-width="0.65"/><path d="M-7.5,-0.4 L7.5,0.8" stroke="#484848" stroke-width="0.5"/></g>
<g transform="translate(498.1,168.4) rotate(21.4) scale(1.08)"><path d="M-6,1.5 L6.5,2.7 L6.5,5 C6.5,14 -5,14 -5,4.8 L-6,4.5Z" fill="#808080" stroke="#2e2e2e" stroke-width="0.7"/><path d="M-7,1.8 L-7.6,9" stroke="#333" stroke-width="0.7"/><path d="M-8.5,-2.2 L6.5,-1.2 L7.5,2.8 L-7.5,1.6Z" fill="#585858" stroke="#2a2a2a" stroke-width="0.65"/><path d="M-7.5,-0.4 L7.5,0.8" stroke="#484848" stroke-width="0.5"/></g>
<g transform="translate(513.1,174.9) rotate(23.4) scale(0.95)"><path d="M-6,1.5 L6.5,2.7 L6.5,5 C6.5,14 -5,14 -5,4.8 L-6,4.5Z" fill="#808080" stroke="#2e2e2e" stroke-width="0.7"/><path d="M-7,1.8 L-7.6,9" stroke="#333" stroke-width="0.7"/><path d="M-8.5,-2.2 L6.5,-1.2 L7.5,2.8 L-7.5,1.6Z" fill="#585858" stroke="#2a2a2a" stroke-width="0.65"/><path d="M-7.5,-0.4 L7.5,0.8" stroke="#484848" stroke-width="0.5"/></g>
<g transform="translate(528.6,185.2) rotate(28.9) scale(0.95)"><path d="M-6,1.5 L6.5,2.7 L6.5,5 C6.5,14 -5,14 -5,4.8 L-6,4.5Z" fill="#808080" stroke="#2e2e2e" stroke-width="0.7"/><path d="M-7,1.8 L-7.6,9" stroke="#333" stroke-width="0.7"/><path d="M-8.5,-2.2 L6.5,-1.2 L7.5,2.8 L-7.5,1.6Z" fill="#585858" stroke="#2a2a2a" stroke-width="0.65"/><path d="M-7.5,-0.4 L7.5,0.8" stroke="#484848" stroke-width="0.5"/></g>
<g transform="translate(543.5,195.5) rotate(30.2) scale(0.85)"><path d="M-6,1.5 L6.5,2.7 L6.5,5 C6.5,14 -5,14 -5,4.8 L-6,4.5Z" fill="#808080" stroke="#2e2e2e" stroke-width="0.7"/><path d="M-7,1.8 L-7.6,9" stroke="#333" stroke-width="0.7"/><path d="M-8.5,-2.2 L6.5,-1.2 L7.5,2.8 L-7.5,1.6Z" fill="#585858" stroke="#2a2a2a" stroke-width="0.65"/><path d="M-7.5,-0.4 L7.5,0.8" stroke="#484848" stroke-width="0.5"/></g>
<g transform="translate(557.2,203.1) rotate(33.1) scale(0.85)"><path d="M-6,1.5 L6.5,2.7 L6.5,5 C6.5,14 -5,14 -5,4.8 L-6,4.5Z" fill="#808080" stroke="#2e2e2e" stroke-width="0.7"/><path d="M-7,1.8 L-7.6,9" stroke="#333" stroke-width="0.7"/><path d="M-8.5,-2.2 L6.5,-1.2 L7.5,2.8 L-7.5,1.6Z" fill="#585858" stroke="#2a2a2a" stroke-width="0.65"/><path d="M-7.5,-0.4 L7.5,0.8" stroke="#484848" stroke-width="0.5"/></g>
<g transform="translate(570.5,206.3) rotate(34.6) scale(0.85)"><path d="M-6,1.5 L6.5,2.7 L6.5,5 C6.5,14 -5,14 -5,4.8 L-6,4.5Z" fill="#808080" stroke="#2e2e2e" stroke-width="0.7"/><path d="M-7,1.8 L-7.6,9" stroke="#333" stroke-width="0.7"/><path d="M-8.5,-2.2 L6.5,-1.2 L7.5,2.8 L-7.5,1.6Z" fill="#585858" stroke="#2a2a2a" stroke-width="0.65"/><path d="M-7.5,-0.4 L7.5,0.8" stroke="#484848" stroke-width="0.5"/></g>
<g transform="translate(461.4,162.2) rotate(13.4) scale(1.08)"><path d="M-6,1.5 L6.5,2.7 L6.5,5 C6.5,14 -5,14 -5,4.8 L-6,4.5Z" fill="#808080" stroke="#2e2e2e" stroke-width="0.7"/><path d="M-7,1.8 L-7.6,9" stroke="#333" stroke-width="0.7"/><path d="M-8.5,-2.2 L6.5,-1.2 L7.5,2.8 L-7.5,1.6Z" fill="#585858" stroke="#2a2a2a" stroke-width="0.65"/><path d="M-7.5,-0.4 L7.5,0.8" stroke="#484848" stroke-width="0.5"/></g>
<g transform="translate(476.1,166.4) rotate(17.0) scale(1.08)"><path d="M-6,1.5 L6.5,2.7 L6.5,5 C6.5,14 -5,14 -5,4.8 L-6,4.5Z" fill="#808080" stroke="#2e2e2e" stroke-width="0.7"/><path d="M-7,1.8 L-7.6,9" stroke="#333" stroke-width="0.7"/><path d="M-8.5,-2.2 L6.5,-1.2 L7.5,2.8 L-7.5,1.6Z" fill="#585858" stroke="#2a2a2a" stroke-width="0.65"/><path d="M-7.5,-0.4 L7.5,0.8" stroke="#484848" stroke-width="0.5"/></g>
<g transform="translate(492.0,172.5) rotate(21.1) scale(1.08)"><path d="M-6,1.5 L6.5,2.7 L6.5,5 C6.5,14 -5,14 -5,4.8 L-6,4.5Z" fill="#808080" stroke="#2e2e2e" stroke-width="0.7"/><path d="M-7,1.8 L-7.6,9" stroke="#333" stroke-width="0.7"/><path d="M-8.5,-2.2 L6.5,-1.2 L7.5,2.8 L-7.5,1.6Z" fill="#585858" stroke="#2a2a2a" stroke-width="0.65"/><path d="M-7.5,-0.4 L7.5,0.8" stroke="#484848" stroke-width="0.5"/></g>
<g transform="translate(506.8,180.1) rotate(21.4) scale(0.95)"><path d="M-6,1.5 L6.5,2.7 L6.5,5 C6.5,14 -5,14 -5,4.8 L-6,4.5Z" fill="#808080" stroke="#2e2e2e" stroke-width="0.7"/><path d="M-7,1.8 L-7.6,9" stroke="#333" stroke-width="0.7"/><path d="M-8.5,-2.2 L6.5,-1.2 L7.5,2.8 L-7.5,1.6Z" fill="#585858" stroke="#2a2a2a" stroke-width="0.65"/><path d="M-7.5,-0.4 L7.5,0.8" stroke="#484848" stroke-width="0.5"/></g>
<g transform="translate(521.2,189.6) rotate(27.3) scale(0.95)"><path d="M-6,1.5 L6.5,2.7 L6.5,5 C6.5,14 -5,14 -5,4.8 L-6,4.5Z" fill="#808080" stroke="#2e2e2e" stroke-width="0.7"/><path d="M-7,1.8 L-7.6,9" stroke="#333" stroke-width="0.7"/><path d="M-8.5,-2.2 L6.5,-1.2 L7.5,2.8 L-7.5,1.6Z" fill="#585858" stroke="#2a2a2a" stroke-width="0.65"/><path d="M-7.5,-0.4 L7.5,0.8" stroke="#484848" stroke-width="0.5"/></g>
<g transform="translate(536.0,200.0) rotate(29.3) scale(0.85)"><path d="M-6,1.5 L6.5,2.7 L6.5,5 C6.5,14 -5,14 -5,4.8 L-6,4.5Z" fill="#808080" stroke="#2e2e2e" stroke-width="0.7"/><path d="M-7,1.8 L-7.6,9" stroke="#333" stroke-width="0.7"/><path d="M-8.5,-2.2 L6.5,-1.2 L7.5,2.8 L-7.5,1.6Z" fill="#585858" stroke="#2a2a2a" stroke-width="0.65"/><path d="M-7.5,-0.4 L7.5,0.8" stroke="#484848" stroke-width="0.5"/></g>
<g transform="translate(551.2,205.3) rotate(31.8) scale(0.85)"><path d="M-6,1.5 L6.5,2.7 L6.5,5 C6.5,14 -5,14 -5,4.8 L-6,4.5Z" fill="#808080" stroke="#2e2e2e" stroke-width="0.7"/><path d="M-7,1.8 L-7.6,9" stroke="#333" stroke-width="0.7"/><path d="M-8.5,-2.2 L6.5,-1.2 L7.5,2.8 L-7.5,1.6Z" fill="#585858" stroke="#2a2a2a" stroke-width="0.65"/><path d="M-7.5,-0.4 L7.5,0.8" stroke="#484848" stroke-width="0.5"/></g>
<g transform="translate(565.2,205.9) rotate(33.3) scale(0.85)"><path d="M-6,1.5 L6.5,2.7 L6.5,5 C6.5,14 -5,14 -5,4.8 L-6,4.5Z" fill="#808080" stroke="#2e2e2e" stroke-width="0.7"/><path d="M-7,1.8 L-7.6,9" stroke="#333" stroke-width="0.7"/><path d="M-8.5,-2.2 L6.5,-1.2 L7.5,2.8 L-7.5,1.6Z" fill="#585858" stroke="#2a2a2a" stroke-width="0.65"/><path d="M-7.5,-0.4 L7.5,0.8" stroke="#484848" stroke-width="0.5"/></g>
<g transform="translate(577.2,206.3) rotate(36.2) scale(0.85)"><path d="M-6,1.5 L6.5,2.7 L6.5,5 C6.5,14 -5,14 -5,4.8 L-6,4.5Z" fill="#808080" stroke="#2e2e2e" stroke-width="0.7"/><path d="M-7,1.8 L-7.6,9" stroke="#333" stroke-width="0.7"/><path d="M-8.5,-2.2 L6.5,-1.2 L7.5,2.8 L-7.5,1.6Z" fill="#585858" stroke="#2a2a2a" stroke-width="0.65"/><path d="M-7.5,-0.4 L7.5,0.8" stroke="#484848" stroke-width="0.5"/></g>
<g transform="translate(524.5,202.4) rotate(28.2) scale(0.95)"><path d="M-6,1.5 L6.5,2.7 L6.5,5 C6.5,14 -5,14 -5,4.8 L-6,4.5Z" fill="#808080" stroke="#2e2e2e" stroke-width="0.7"/><path d="M-7,1.8 L-7.6,9" stroke="#333" stroke-width="0.7"/><path d="M-8.5,-2.2 L6.5,-1.2 L7.5,2.8 L-7.5,1.6Z" fill="#585858" stroke="#2a2a2a" stroke-width="0.65"/><path d="M-7.5,-0.4 L7.5,0.8" stroke="#484848" stroke-width="0.5"/></g>
<g transform="translate(539.4,204.9) rotate(29.7) scale(0.85)"><path d="M-6,1.5 L6.5,2.7 L6.5,5 C6.5,14 -5,14 -5,4.8 L-6,4.5Z" fill="#808080" stroke="#2e2e2e" stroke-width="0.7"/><path d="M-7,1.8 L-7.6,9" stroke="#333" stroke-width="0.7"/><path d="M-8.5,-2.2 L6.5,-1.2 L7.5,2.8 L-7.5,1.6Z" fill="#585858" stroke="#2a2a2a" stroke-width="0.65"/><path d="M-7.5,-0.4 L7.5,0.8" stroke="#484848" stroke-width="0.5"/></g>
<g transform="translate(554.6,205.7) rotate(32.6) scale(0.85)"><path d="M-6,1.5 L6.5,2.7 L6.5,5 C6.5,14 -5,14 -5,4.8 L-6,4.5Z" fill="#808080" stroke="#2e2e2e" stroke-width="0.7"/><path d="M-7,1.8 L-7.6,9" stroke="#333" stroke-width="0.7"/><path d="M-8.5,-2.2 L6.5,-1.2 L7.5,2.8 L-7.5,1.6Z" fill="#585858" stroke="#2a2a2a" stroke-width="0.65"/><path d="M-7.5,-0.4 L7.5,0.8" stroke="#484848" stroke-width="0.5"/></g>
<g transform="translate(437.5,166.2) rotate(11.5) scale(1.08)"><path d="M-6,1.5 L6.5,2.7 L6.5,5 C6.5,14 -5,14 -5,4.8 L-6,4.5Z" fill="#808080" stroke="#2e2e2e" stroke-width="0.7"/><path d="M-7,1.8 L-7.6,9" stroke="#333" stroke-width="0.7"/><path d="M-8.5,-2.2 L6.5,-1.2 L7.5,2.8 L-7.5,1.6Z" fill="#585858" stroke="#2a2a2a" stroke-width="0.65"/><path d="M-7.5,-0.4 L7.5,0.8" stroke="#484848" stroke-width="0.5"/></g>
<g transform="translate(451.7,167.8) rotate(12.4) scale(1.08)"><path d="M-6,1.5 L6.5,2.7 L6.5,5 C6.5,14 -5,14 -5,4.8 L-6,4.5Z" fill="#808080" stroke="#2e2e2e" stroke-width="0.7"/><path d="M-7,1.8 L-7.6,9" stroke="#333" stroke-width="0.7"/><path d="M-8.5,-2.2 L6.5,-1.2 L7.5,2.8 L-7.5,1.6Z" fill="#585858" stroke="#2a2a2a" stroke-width="0.65"/><path d="M-7.5,-0.4 L7.5,0.8" stroke="#484848" stroke-width="0.5"/></g>
<g transform="translate(466.0,172.4) rotate(14.4) scale(1.08)"><path d="M-6,1.5 L6.5,2.7 L6.5,5 C6.5,14 -5,14 -5,4.8 L-6,4.5Z" fill="#808080" stroke="#2e2e2e" stroke-width="0.7"/><path d="M-7,1.8 L-7.6,9" stroke="#333" stroke-width="0.7"/><path d="M-8.5,-2.2 L6.5,-1.2 L7.5,2.8 L-7.5,1.6Z" fill="#585858" stroke="#2a2a2a" stroke-width="0.65"/><path d="M-7.5,-0.4 L7.5,0.8" stroke="#484848" stroke-width="0.5"/></g>
<g transform="translate(480.9,181.5) rotate(19.0) scale(1.08)"><path d="M-6,1.5 L6.5,2.7 L6.5,5 C6.5,14 -5,14 -5,4.8 L-6,4.5Z" fill="#808080" stroke="#2e2e2e" stroke-width="0.7"/><path d="M-7,1.8 L-7.6,9" stroke="#333" stroke-width="0.7"/><path d="M-8.5,-2.2 L6.5,-1.2 L7.5,2.8 L-7.5,1.6Z" fill="#585858" stroke="#2a2a2a" stroke-width="0.65"/><path d="M-7.5,-0.4 L7.5,0.8" stroke="#484848" stroke-width="0.5"/></g>
<g transform="translate(495.1,189.6) rotate(21.3) scale(1.08)"><path d="M-6,1.5 L6.5,2.7 L6.5,5 C6.5,14 -5,14 -5,4.8 L-6,4.5Z" fill="#808080" stroke="#2e2e2e" stroke-width="0.7"/><path d="M-7,1.8 L-7.6,9" stroke="#333" stroke-width="0.7"/><path d="M-8.5,-2.2 L6.5,-1.2 L7.5,2.8 L-7.5,1.6Z" fill="#585858" stroke="#2a2a2a" stroke-width="0.65"/><path d="M-7.5,-0.4 L7.5,0.8" stroke="#484848" stroke-width="0.5"/></g>
<g transform="translate(510.0,203.6) rotate(22.2) scale(0.95)"><path d="M-6,1.5 L6.5,2.7 L6.5,5 C6.5,14 -5,14 -5,4.8 L-6,4.5Z" fill="#808080" stroke="#2e2e2e" stroke-width="0.7"/><path d="M-7,1.8 L-7.6,9" stroke="#333" stroke-width="0.7"/><path d="M-8.5,-2.2 L6.5,-1.2 L7.5,2.8 L-7.5,1.6Z" fill="#585858" stroke="#2a2a2a" stroke-width="0.65"/><path d="M-7.5,-0.4 L7.5,0.8" stroke="#484848" stroke-width="0.5"/></g>
<path d="M513.4,215.8 L586,218.5 L594.8,231.8 L522,227.4 Z" fill="#737373" stroke="#383838" stroke-width="0.6"/>
<path d="M530.0,216.5 L534.7,225.0 L533.5,216.5Z" fill="#8e8e8e" stroke="#333" stroke-width="0.6"/>
<path d="M551.0,217.3 L555.7,225.8 L554.5,217.3Z" fill="#8e8e8e" stroke="#333" stroke-width="0.6"/>
<path d="M567.5,217.9 L572.2,226.4 L571.0,217.9Z" fill="#8e8e8e" stroke="#333" stroke-width="0.6"/>
<path d="M581.5,218.4 L586.2,226.9 L585.0,218.4Z" fill="#8e8e8e" stroke="#333" stroke-width="0.6"/>
<path d="M500.0,162.5 C502.7,163.1 510.8,164.3 516.3,166.3 C521.8,168.3 527.2,171.5 532.7,174.5 C538.2,177.5 544.1,181.0 549.0,184.3 C553.9,187.6 558.2,191.1 562.0,194.1 C565.8,197.1 568.6,199.3 571.9,202.3 C575.2,205.3 579.5,209.7 581.7,212.1 C583.9,214.5 584.5,216.2 585.0,217.0" stroke="#3c3c3c" stroke-width="3" fill="none"/>
<path d="M431.0,162.0 C434.2,161.5 444.2,159.6 450.0,158.8 C455.8,158.0 461.0,157.3 466.0,157.0 C471.0,156.7 474.3,156.4 480.0,157.0 C485.7,157.6 493.9,159.4 500.0,160.7 C506.1,162.0 510.8,162.8 516.3,164.8 C521.8,166.9 527.2,170.0 532.7,173.0 C538.2,176.0 544.1,179.5 549.0,182.8 C553.9,186.1 558.2,189.6 562.0,192.6 C565.8,195.6 568.6,197.8 571.9,200.8 C575.2,203.8 579.5,208.2 581.7,210.6 C583.9,213.0 584.5,214.7 585.0,215.5" stroke="#383838" stroke-width="2.2" fill="none"/>
<path d="M468,306 L476,228" stroke="#2f6bff" stroke-width="1.3"/>
<text x="476.5" y="236.5" font-size="8" fill="#2f6bff">z</text>
<path d="M468,306 L521,313" stroke="#e02020" stroke-width="1.4"/>
<path d="M468,305.5 L525,310" stroke="#40c040" stroke-width="1.2"/>
<text x="520.5" y="320" font-size="8" fill="#e02020">x</text>
<text x="524.5" y="318" font-size="8" fill="#40c040">y</text>
<rect x="469" y="312.8" width="22" height="12.6" fill="none" stroke="#6a737c" stroke-width="1"/>
<text x="480" y="322.5" text-anchor="middle" font-size="8.3" fill="#4a4a4a" textLength="18" lengthAdjust="spacingAndGlyphs">WCS</text>
<circle cx="544.3" cy="298" r="2.2" fill="#30d030" stroke="#225522" stroke-width="0.8"/>
<path d="M1137.5,430.5 L1142,384" stroke="#5b8cff" stroke-width="1.1"/>
<text x="1142" y="389" font-size="8.5" fill="#5b8cff">Z</text>
<path d="M1137.5,430.5 L1170,433.5" stroke="#d04040" stroke-width="1.1"/>
<path d="M1137.5,430 L1170,432" stroke="#60c060" stroke-width="0.9"/>
<path d="M1172,436.5 L1178,443 M1178,436.5 L1172,443" stroke="#e05a5a" stroke-width="0.9"/>
<path d="M1175.5,435 L1177.5,439 L1180,433.5 M1177.5,439 L1176,442" stroke="#7ac87a" stroke-width="0.9" fill="none"/>
<defs><linearGradient id="rg" x1="0" y1="0" x2="0" y2="1"><stop offset="0" stop-color="#f0f6fc"/><stop offset="0.35" stop-color="#e2eefa"/><stop offset="1" stop-color="#c2dff7"/></linearGradient></defs>
<rect x="0" y="492" width="1200" height="28" fill="url(#rg)"/>
<rect x="0" y="491.6" width="1200" height="1" fill="#a0a0a0"/>
<rect x="0.00" y="492.4" width="1" height="8.5" fill="#8c8c8c"/>
<rect x="10.40" y="492.4" width="1" height="2.6" fill="#8c8c8c"/>
<rect x="21.80" y="492.4" width="1" height="2.6" fill="#8c8c8c"/>
<rect x="33.20" y="492.4" width="1" height="2.6" fill="#8c8c8c"/>
<rect x="44.60" y="492.4" width="1" height="2.6" fill="#8c8c8c"/>
<rect x="56.00" y="492.4" width="1" height="5.5" fill="#8c8c8c"/>
<rect x="67.40" y="492.4" width="1" height="2.6" fill="#8c8c8c"/>
<rect x="78.80" y="492.4" width="1" height="2.6" fill="#8c8c8c"/>
<rect x="90.20" y="492.4" width="1" height="2.6" fill="#8c8c8c"/>
<rect x="101.60" y="492.4" width="1" height="2.6" fill="#8c8c8c"/>
<rect x="113.00" y="492.4" width="1" height="8.5" fill="#8c8c8c"/>
<rect x="124.40" y="492.4" width="1" height="2.6" fill="#8c8c8c"/>
<rect x="135.80" y="492.4" width="1" height="2.6" fill="#8c8c8c"/>
<rect x="147.20" y="492.4" width="1" height="2.6" fill="#8c8c8c"/>
<rect x="158.60" y="492.4" width="1" height="2.6" fill="#8c8c8c"/>
<rect x="170.00" y="492.4" width="1" height="5.5" fill="#8c8c8c"/>
<rect x="181.40" y="492.4" width="1" height="2.6" fill="#8c8c8c"/>
<rect x="192.80" y="492.4" width="1" height="2.6" fill="#8c8c8c"/>
<rect x="204.20" y="492.4" width="1" height="2.6" fill="#8c8c8c"/>
<rect x="215.60" y="492.4" width="1" height="2.6" fill="#8c8c8c"/>
<rect x="227.00" y="492.4" width="1" height="8.5" fill="#8c8c8c"/>
<rect x="238.40" y="492.4" width="1" height="2.6" fill="#8c8c8c"/>
<rect x="249.80" y="492.4" width="1" height="2.6" fill="#8c8c8c"/>
<rect x="261.20" y="492.4" width="1" height="2.6" fill="#8c8c8c"/>
<rect x="272.60" y="492.4" width="1" height="2.6" fill="#8c8c8c"/>
<rect x="284.00" y="492.4" width="1" height="5.5" fill="#8c8c8c"/>
<rect x="295.40" y="492.4" width="1" height="2.6" fill="#8c8c8c"/>
<rect x="306.80" y="492.4" width="1" height="2.6" fill="#8c8c8c"/>
<rect x="318.20" y="492.4" width="1" height="2.6" fill="#8c8c8c"/>
<rect x="329.60" y="492.4" width="1" height="2.6" fill="#8c8c8c"/>
<rect x="341.00" y="492.4" width="1" height="8.5" fill="#8c8c8c"/>
<rect x="352.40" y="492.4" width="1" height="2.6" fill="#8c8c8c"/>
<rect x="363.80" y="492.4" width="1" height="2.6" fill="#8c8c8c"/>
<rect x="375.20" y="492.4" width="1" height="2.6" fill="#8c8c8c"/>
<rect x="386.60" y="492.4" width="1" height="2.6" fill="#8c8c8c"/>
<rect x="398.00" y="492.4" width="1" height="5.5" fill="#8c8c8c"/>
<rect x="409.40" y="492.4" width="1" height="2.6" fill="#8c8c8c"/>
<rect x="420.80" y="492.4" width="1" height="2.6" fill="#8c8c8c"/>
<rect x="432.20" y="492.4" width="1" height="2.6" fill="#8c8c8c"/>
<rect x="443.60" y="492.4" width="1" height="2.6" fill="#8c8c8c"/>
<rect x="455.00" y="492.4" width="1" height="8.5" fill="#8c8c8c"/>
<rect x="466.40" y="492.4" width="1" height="2.6" fill="#8c8c8c"/>
<rect x="477.80" y="492.4" width="1" height="2.6" fill="#8c8c8c"/>
<rect x="489.20" y="492.4" width="1" height="2.6" fill="#8c8c8c"/>
<rect x="500.60" y="492.4" width="1" height="2.6" fill="#8c8c8c"/>
<rect x="512.00" y="492.4" width="1" height="5.5" fill="#8c8c8c"/>
<rect x="523.40" y="492.4" width="1" height="2.6" fill="#8c8c8c"/>
<rect x="534.80" y="492.4" width="1" height="2.6" fill="#8c8c8c"/>
<rect x="546.20" y="492.4" width="1" height="2.6" fill="#8c8c8c"/>
<rect x="557.60" y="492.4" width="1" height="2.6" fill="#8c8c8c"/>
<rect x="569.00" y="492.4" width="1" height="8.5" fill="#8c8c8c"/>
<rect x="580.40" y="492.4" width="1" height="2.6" fill="#8c8c8c"/>
<rect x="591.80" y="492.4" width="1" height="2.6" fill="#8c8c8c"/>
<rect x="603.20" y="492.4" width="1" height="2.6" fill="#8c8c8c"/>
<rect x="614.60" y="492.4" width="1" height="2.6" fill="#8c8c8c"/>
<rect x="626.00" y="492.4" width="1" height="5.5" fill="#8c8c8c"/>
<rect x="637.40" y="492.4" width="1" height="2.6" fill="#8c8c8c"/>
<rect x="648.80" y="492.4" width="1" height="2.6" fill="#8c8c8c"/>
<rect x="660.20" y="492.4" width="1" height="2.6" fill="#8c8c8c"/>
<rect x="671.60" y="492.4" width="1" height="2.6" fill="#8c8c8c"/>
<rect x="683.00" y="492.4" width="1" height="8.5" fill="#8c8c8c"/>
<rect x="694.40" y="492.4" width="1" height="2.6" fill="#8c8c8c"/>
<rect x="705.80" y="492.4" width="1" height="2.6" fill="#8c8c8c"/>
<rect x="717.20" y="492.4" width="1" height="2.6" fill="#8c8c8c"/>
<rect x="728.60" y="492.4" width="1" height="2.6" fill="#8c8c8c"/>
<rect x="740.00" y="492.4" width="1" height="5.5" fill="#8c8c8c"/>
<rect x="751.40" y="492.4" width="1" height="2.6" fill="#8c8c8c"/>
<rect x="762.80" y="492.4" width="1" height="2.6" fill="#8c8c8c"/>
<rect x="774.20" y="492.4" width="1" height="2.6" fill="#8c8c8c"/>
<rect x="785.60" y="492.4" width="1" height="2.6" fill="#8c8c8c"/>
<rect x="797.00" y="492.4" width="1" height="8.5" fill="#8c8c8c"/>
<rect x="808.40" y="492.4" width="1" height="2.6" fill="#8c8c8c"/>
<rect x="819.80" y="492.4" width="1" height="2.6" fill="#8c8c8c"/>
<rect x="831.20" y="492.4" width="1" height="2.6" fill="#8c8c8c"/>
<rect x="842.60" y="492.4" width="1" height="2.6" fill="#8c8c8c"/>
<rect x="854.00" y="492.4" width="1" height="5.5" fill="#8c8c8c"/>
<rect x="865.40" y="492.4" width="1" height="2.6" fill="#8c8c8c"/>
<rect x="876.80" y="492.4" width="1" height="2.6" fill="#8c8c8c"/>
<rect x="888.20" y="492.4" width="1" height="2.6" fill="#8c8c8c"/>
<rect x="899.60" y="492.4" width="1" height="2.6" fill="#8c8c8c"/>
<rect x="911.00" y="492.4" width="1" height="8.5" fill="#8c8c8c"/>
<rect x="922.40" y="492.4" width="1" height="2.6" fill="#8c8c8c"/>
<rect x="933.80" y="492.4" width="1" height="2.6" fill="#8c8c8c"/>
<rect x="945.20" y="492.4" width="1" height="2.6" fill="#8c8c8c"/>
<rect x="956.60" y="492.4" width="1" height="2.6" fill="#8c8c8c"/>
<rect x="968.00" y="492.4" width="1" height="5.5" fill="#8c8c8c"/>
<rect x="979.40" y="492.4" width="1" height="2.6" fill="#8c8c8c"/>
<rect x="990.80" y="492.4" width="1" height="2.6" fill="#8c8c8c"/>
<rect x="1002.20" y="492.4" width="1" height="2.6" fill="#8c8c8c"/>
<rect x="1013.60" y="492.4" width="1" height="2.6" fill="#8c8c8c"/>
<rect x="1025.00" y="492.4" width="1" height="8.5" fill="#8c8c8c"/>
<rect x="1036.40" y="492.4" width="1" height="2.6" fill="#8c8c8c"/>
<rect x="1047.80" y="492.4" width="1" height="2.6" fill="#8c8c8c"/>
<rect x="1059.20" y="492.4" width="1" height="2.6" fill="#8c8c8c"/>
<rect x="1070.60" y="492.4" width="1" height="2.6" fill="#8c8c8c"/>
<rect x="1082.00" y="492.4" width="1" height="5.5" fill="#8c8c8c"/>
<rect x="1093.40" y="492.4" width="1" height="2.6" fill="#8c8c8c"/>
<rect x="1104.80" y="492.4" width="1" height="2.6" fill="#8c8c8c"/>
<rect x="1116.20" y="492.4" width="1" height="2.6" fill="#8c8c8c"/>
<rect x="1127.60" y="492.4" width="1" height="2.6" fill="#8c8c8c"/>
<rect x="1139.00" y="492.4" width="1" height="8.5" fill="#8c8c8c"/>
<rect x="1150.40" y="492.4" width="1" height="2.6" fill="#8c8c8c"/>
<text x="4.3" y="512.5" text-anchor="middle" font-size="10.5" font-weight="bold" fill="#151515">0</text>
<text x="112.5" y="512.5" text-anchor="middle" font-size="10.5" font-weight="bold" fill="#151515">1</text>
<text x="226.5" y="512.5" text-anchor="middle" font-size="10.5" font-weight="bold" fill="#151515">2</text>
<text x="340.5" y="512.5" text-anchor="middle" font-size="10.5" font-weight="bold" fill="#151515">3</text>
<text x="454.5" y="512.5" text-anchor="middle" font-size="10.5" font-weight="bold" fill="#151515">4</text>
<text x="568.5" y="512.5" text-anchor="middle" font-size="10.5" font-weight="bold" fill="#151515">5</text>
<text x="682.5" y="512.5" text-anchor="middle" font-size="10.5" font-weight="bold" fill="#151515">6</text>
<text x="796.5" y="512.5" text-anchor="middle" font-size="10.5" font-weight="bold" fill="#151515">7</text>
<text x="910.5" y="512.5" text-anchor="middle" font-size="10.5" font-weight="bold" fill="#151515">8</text>
<text x="1024.5" y="512.5" text-anchor="middle" font-size="10.5" font-weight="bold" fill="#151515">9</text>
<text x="1138.5" y="512.5" text-anchor="middle" font-size="10.5" font-weight="bold" fill="#151515">10</text>
<text x="1185.5" y="510.8" text-anchor="middle" font-size="10" font-weight="bold" fill="#151515">cm</text>
</svg>
</body></html>
